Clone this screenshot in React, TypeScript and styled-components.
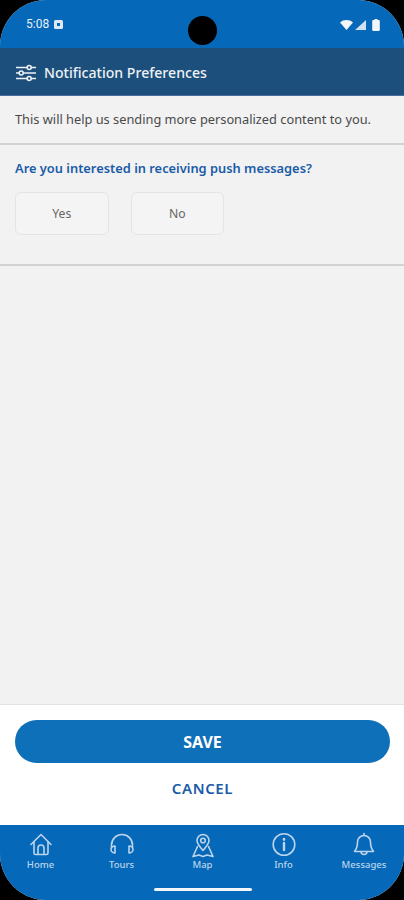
import React from "react";
import styled, { createGlobalStyle } from "styled-components";

const Global = createGlobalStyle`
  html, body { margin: 0; padding: 0; background: #000; }
  * { box-sizing: border-box; }
  #root { width: 404px; height: 900px; }
`;

const Screen = styled.div`
  width: 404px;
  height: 900px;
  border-radius: 46px;
  overflow: hidden;
  display: flex;
  flex-direction: column;
  background: #f2f2f2;
  font-family: "Noto Sans", "Open Sans", sans-serif;
  position: relative;
`;

const StatusBar = styled.div`
  height: 48px;
  flex: none;
  background: #0568b8;
  color: #e8f0f8;
  display: flex;
  align-items: flex-start;
  justify-content: space-between;
  padding: 17px 24px 0 26px;
  font-family: "Roboto", sans-serif;
  font-size: 12px;
  line-height: 15px;
`;

const StatusLeft = styled.div`
  display: flex;
  align-items: center;
  gap: 5px;
`;

const StatusRight = styled.div`
  display: flex;
  align-items: center;
  gap: 2px;
  height: 15px;
`;

const Camera = styled.div`
  position: absolute;
  top: 16px;
  left: 188px;
  width: 29px;
  height: 29px;
  border-radius: 50%;
  background: #000;
`;

const Header = styled.header`
  height: 48px;
  flex: none;
  background: #1d4f7c;
  border-bottom: 1px solid #4a6ea0;
  color: #eef2f6;
  display: flex;
  align-items: center;
  gap: 7px;
  padding: 2px 0 0 16px;
  font-size: 14.1px;
  font-weight: 500;
`;

const Intro = styled.p`
  margin: 0;
  height: 49px;
  flex: none;
  padding: 0 15px 2px;
  display: flex;
  align-items: center;
  font-size: 12.8px;
  color: #4a4a4a;
  border-bottom: 2px solid #d2d2d2;
  white-space: nowrap;
`;

const Section = styled.section`
  height: 121px;
  flex: none;
  padding: 14px 15px 0;
  border-bottom: 2px solid #d2d2d2;
`;

const Question = styled.h2`
  margin: 0;
  font-size: 12.85px;
  line-height: 18px;
  font-weight: 600;
  color: #1a5ca8;
  white-space: nowrap;
`;

const Options = styled.div`
  display: flex;
  gap: 22px;
  margin-top: 15px;
`;

const Option = styled.button`
  width: 93.5px;
  height: 43px;
  background: #f4f4f4;
  border: 1px solid #e4e4e4;
  border-radius: 6px;
  color: #666;
  font: 12.2px "Noto Sans", sans-serif;
  padding: 0;
`;

const Spacer = styled.div`
  flex: 1;
`;

const Footer = styled.div`
  height: 121px;
  flex: none;
  background: #fff;
  border-top: 1px solid #e2e2e2;
  padding: 15px 14px 0 15px;
  display: flex;
  flex-direction: column;
  align-items: center;
`;

const SaveButton = styled.button`
  width: 100%;
  height: 43px;
  flex: none;
  border: none;
  border-radius: 22px;
  background: #0e70b8;
  color: #fff;
  font: 700 16px "Noto Sans", sans-serif;
  padding: 0;
`;

const CancelButton = styled.button`
  margin-top: 13px;
  border: none;
  background: none;
  color: #1a5ca8;
  font: 600 15px/24px "Noto Sans", sans-serif;
  letter-spacing: 0.6px;
  padding: 0;
`;

const Nav = styled.nav`
  height: 75px;
  flex: none;
  background: #0568b8;
  display: grid;
  grid-template-columns: 81px 81px 81px 81px 80px;
  padding-top: 7px;
  position: relative;
`;

const NavItem = styled.div`
  display: flex;
  flex-direction: column;
  align-items: center;
  color: #bcd4ec;
  font-size: 9.5px;
  font-weight: 500;
  line-height: 12px;
`;

const NavIcon = styled.svg`
  width: 26px;
  height: 26px;
  fill: none;
  stroke: #bcd4ec;
  stroke-width: 1.6;
  stroke-linecap: round;
  stroke-linejoin: round;
  margin-bottom: 1px;
`;

const HomeBar = styled.div`
  position: absolute;
  left: 154px;
  bottom: 9px;
  width: 98px;
  height: 3px;
  border-radius: 2px;
  background: #f4f8fc;
`;

const navItems = [
  {
    label: "Home",
    icon: (
      <>
        <path d="M3 12.500 13 2.500l10 10" />
        <path d="M6 10V21a1.500 1.500 0 0 0 1.500 1.500h11A1.500 1.500 0 0 0 20 21V10" />
        <path d="M10 22v-6a3 3 0 0 1 6 0v6" />
      </>
    ),
  },
  {
    label: "Tours",
    icon: (
      <>
        <path d="M2.500 16v-3a10.500 10.500 0 0 1 21 0v3" />
        <path d="M6 14v7c-2 0-4-1.500-4-3.500S4 14 6 14Z" />
        <path d="M20 14v7c2 0 4-1.500 4-3.500S22 14 20 14Z" />
      </>
    ),
  },
  {
    label: "Map",
    icon: (
      <>
        <path d="M13 18.500c-3.500-4-6-6.800-6-10a6 6 0 0 1 12 0c0 3.200-2.500 6-6 10Z" />
        <circle cx="13" cy="8.500" r="2.300" />
        <path d="M7.500 14.500 3 24.500l6-1.500 4 1.500 4-1.500 6 1.500-4.500-10" />
      </>
    ),
  },
  {
    label: "Info",
    icon: (
      <>
        <circle cx="13" cy="12.500" r="10.800" />
        <path d="M13 11v7" strokeWidth="2.400" />
        <path d="M13 7v.6" strokeWidth="2.600" />
      </>
    ),
  },
  {
    label: "Messages",
    icon: (
      <>
        <path d="M13 3.500a6.500 6.500 0 0 0-6.500 6.500c0 5-1 7-3 9.500h19c-2-2.500-3-4.500-3-9.500A6.500 6.500 0 0 0 13 3.500Z" />
        <path d="M13 3.500V1.500" />
        <path d="M10 19.500a3 3 0 0 0 6 0" />
      </>
    ),
  },
];

export default function App() {
  return (
    <>
      <Global />
      <Screen>
        <StatusBar>
          <StatusLeft>
            5:08
            <svg width="9" height="9" viewBox="0 0 9 9">
              <rect width="9" height="9" rx="1.500" fill="#dfe9f4" />
              <rect x="3" y="3" width="3" height="3" fill="#0568b8" />
            </svg>
          </StatusLeft>
          <StatusRight>
            <svg width="13" height="10" viewBox="0 0 13 10">
              <path d="M0 2.500C3.500-.8 9.500-.8 13 2.500L6.500 10Z" fill="#f2f6fa" />
            </svg>
            <svg width="11" height="10" viewBox="0 0 11 10">
              <path d="M11 0v10H0Z" fill="#f2f6fa" opacity=".85" />
            </svg>
            <svg width="8" height="12" viewBox="0 0 8 12" style={{ marginLeft: 4 }}>
              <path d="M2.500 0h3v1h1.300a1 1 0 0 1 1 1v9a1 1 0 0 1-1 1H1.200a1 1 0 0 1-1-1V2a1 1 0 0 1 1-1h1.300Z" fill="#f2f6fa" />
            </svg>
          </StatusRight>
        </StatusBar>
        <Camera />
        <Header>
          <svg width="21" height="18" viewBox="0 0 21 18" fill="none" stroke="#eef2f6" strokeWidth="1.600">
            <path d="M0 3.500h11M15.500 3.500H20M0 9h3M7.500 9H20M0 14.500h11M15.500 14.500H20" />
            <circle cx="13.200" cy="3.500" r="2" />
            <circle cx="5.200" cy="9" r="2" />
            <circle cx="13.200" cy="14.500" r="2" />
          </svg>
          Notification Preferences
        </Header>
        <Intro>This will help us sending more personalized content to you.</Intro>
        <Section>
          <Question>Are you interested in receiving push messages?</Question>
          <Options>
            <Option>Yes</Option>
            <Option>No</Option>
          </Options>
        </Section>
        <Spacer />
        <Footer>
          <SaveButton>SAVE</SaveButton>
          <CancelButton>CANCEL</CancelButton>
        </Footer>
        <Nav>
          {navItems.map((item) => (
            <NavItem key={item.label}>
              <NavIcon viewBox="0 0 26 26">{item.icon}</NavIcon>
              {item.label}
            </NavItem>
          ))}
          <HomeBar />
        </Nav>
      </Screen>
    </>
  );
}
